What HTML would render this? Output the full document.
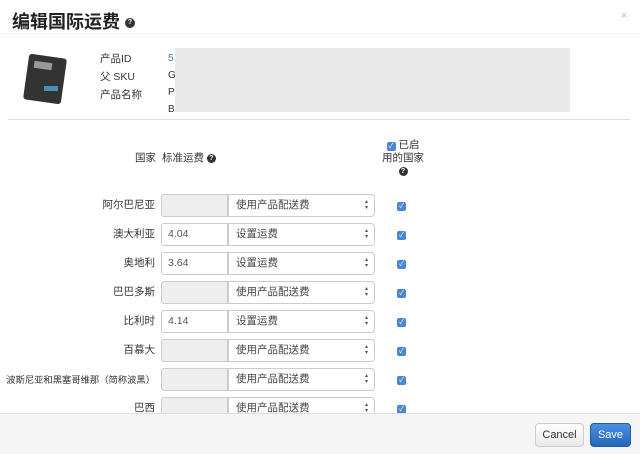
<!DOCTYPE html>
<html><head><meta charset="utf-8"><style>
*{box-sizing:border-box;margin:0;padding:0}
body{width:640px;height:454px;overflow:hidden;background:#fff;font-family:"Liberation Sans","Noto Sans CJK SC",sans-serif;color:#333;font-size:10px;position:relative}
.a{position:absolute}
.q{display:inline-block;width:9px;height:9px;border-radius:50%;background:#333;color:#fff;font-size:7px;line-height:9px;text-align:center;font-weight:bold;vertical-align:middle}
.lbl{position:absolute;left:0;width:155px;text-align:right;font-size:10.5px;white-space:nowrap}
.inp{position:absolute;left:161px;width:67px;height:23px;border:1px solid #ccc;border-radius:3px 0 0 3px;padding-left:6px;line-height:21px;font-size:10.5px;color:#555}
.dis{background:#eee}
.sel{position:absolute;left:228px;width:147px;height:23px;border:1px solid #ccc;border-radius:0 4px 4px 0;background:#fff;padding-left:7px;line-height:21px;font-size:10.5px;color:#444}
.sel:after{content:"▴\A▾";white-space:pre;position:absolute;right:6px;top:4px;font-size:6px;line-height:6px;color:#555}
.cb{position:absolute;left:397px;width:9px;height:9px;background:#4a86d4;border-radius:2px;color:#fff;font-size:7px;line-height:9px;text-align:center}
</style></head><body>
<div class="a" style="left:12px;top:8px;font-size:18px;font-weight:bold;color:#222">编辑国际运费 <span class="q" style="width:10px;height:10px;line-height:10px">?</span></div>
<div class="a" style="left:621px;top:10px;color:#bbb;font-size:11px">×</div>
<div class="a" style="left:0;top:33px;width:640px;height:1px;background:#f2f2f2"></div>
<div class="a" style="left:26px;top:56px;width:38px;height:46px;background:#333;border-radius:3px;transform:rotate(8deg)"></div>
<div class="a" style="left:34px;top:62px;width:18px;height:7px;background:#999;transform:rotate(8deg)"></div>
<div class="a" style="left:44px;top:86px;width:14px;height:5px;background:#4a8fb8"></div>
<div class="a" style="left:100px;top:50px;line-height:18px;font-size:10.5px">产品ID<br>父 SKU<br>产品名称</div>
<div class="a" style="left:168px;top:50px;line-height:17px"><span style="color:#4a7ab5">5</span><br>G<br>P<br>B</div>
<div class="a" style="left:175px;top:48px;width:395px;height:64px;background:#e9e9e9"></div>
<div class="a" style="left:8px;top:119px;width:622px;height:1px;background:#ddd"></div>
<div class="a" style="left:135px;top:150px;font-size:10.5px">国家</div>
<div class="a" style="left:162px;top:150px;font-size:10.5px">标准运费 <span class="q">?</span></div>
<div class="a" style="left:380px;top:139px;line-height:13px;text-align:center;width:46px;font-size:10.5px"><span class="cb" style="position:relative;left:0;display:inline-block">✓</span> 已启<br>用的国家<br><span class="q">?</span></div>
<div class="lbl" style="top:197px">阿尔巴尼亚</div><div class="inp dis" style="top:194px"></div><div class="sel" style="top:194px">使用产品配送费</div><div class="cb" style="top:202px">✓</div>
<div class="lbl" style="top:226px">澳大利亚</div><div class="inp" style="top:223px">4.04</div><div class="sel" style="top:223px">设置运费</div><div class="cb" style="top:231px">✓</div>
<div class="lbl" style="top:255px">奥地利</div><div class="inp" style="top:252px">3.64</div><div class="sel" style="top:252px">设置运费</div><div class="cb" style="top:260px">✓</div>
<div class="lbl" style="top:284px">巴巴多斯</div><div class="inp dis" style="top:281px"></div><div class="sel" style="top:281px">使用产品配送费</div><div class="cb" style="top:289px">✓</div>
<div class="lbl" style="top:313px">比利时</div><div class="inp" style="top:310px">4.14</div><div class="sel" style="top:310px">设置运费</div><div class="cb" style="top:318px">✓</div>
<div class="lbl" style="top:342px">百慕大</div><div class="inp dis" style="top:339px"></div><div class="sel" style="top:339px">使用产品配送费</div><div class="cb" style="top:347px">✓</div>
<div class="lbl" style="top:372px;font-size:9.3px">波斯尼亚和黑塞哥维那（简称波黑）</div><div class="inp dis" style="top:368px"></div><div class="sel" style="top:368px">使用产品配送费</div><div class="cb" style="top:376px">✓</div>
<div class="lbl" style="top:400px">巴西</div><div class="inp dis" style="top:397px"></div><div class="sel" style="top:397px">使用产品配送费</div><div class="cb" style="top:405px">✓</div>
<div class="a" style="left:0;top:413px;width:640px;height:41px;background:#f5f5f5;border-top:1px solid #e0e0e0"></div>
<div class="a" style="left:535px;top:423px;width:49px;height:24px;border:1px solid #ccc;border-radius:4px;background:linear-gradient(#fff,#e8e8e8);text-align:center;line-height:22px;color:#333;font-size:11px">Cancel</div>
<div class="a" style="left:590px;top:423px;width:41px;height:24px;border:1px solid #1f5ea8;border-radius:4px;background:linear-gradient(#4a90e2,#2566b8);text-align:center;line-height:22px;color:#fff;font-size:11px">Save</div>
</body></html>
